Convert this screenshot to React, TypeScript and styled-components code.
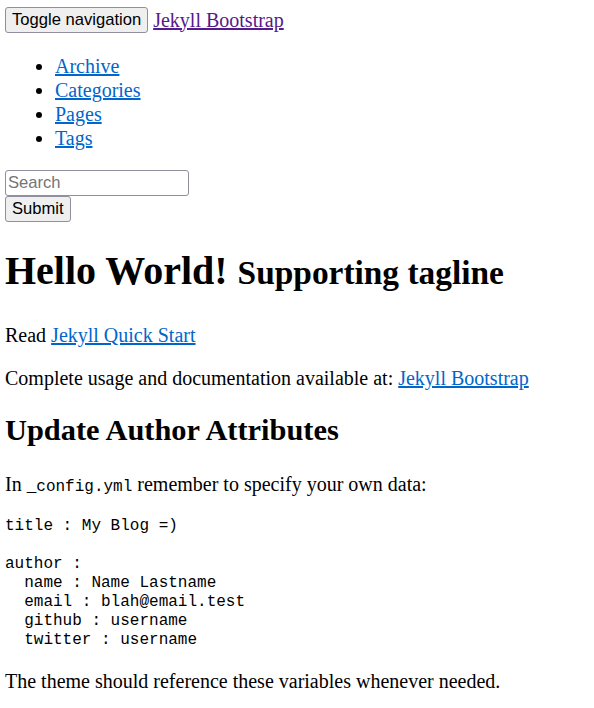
import React from "react";
import styled, { createGlobalStyle } from "styled-components";

const Global = createGlobalStyle`
  html, body { background: #fff; }
  body {
    margin: 7px 5px;
    font-family: "Liberation Serif", "Times New Roman", serif;
    font-size: 20px;
    line-height: 1.15;
    color: #000;
  }
`;

const TopBar = styled.div`
  display: flex;
  align-items: center;
  gap: 5px;
`;

const NativeButton = styled.button`
  font-family: "Liberation Sans", Arial, sans-serif;
  font-size: 16.6px;
  line-height: 19px;
  color: #000;
  background: #efeff0;
  border: 1px solid #8f8f9d;
  border-radius: 3px;
  padding: 2px 6px 3px;
  margin: 0;
`;

const Link = styled.a<{ $visited?: boolean }>`
  color: ${(p) => (p.$visited ? "#551a8b" : "#0066cc")};
  text-decoration: underline;
`;

const NavList = styled.ul`
  margin: 21px 0 20px;
  padding-left: 50px;
  list-style: disc;
  line-height: 24px;
`;

const SearchForm = styled.form`
  display: flex;
  flex-direction: column;
  align-items: flex-start;
`;

const SearchInput = styled.input`
  font-family: "Liberation Sans", Arial, sans-serif;
  font-size: 16.6px;
  width: 184px;
  height: 26px;
  box-sizing: border-box;
  border: 1px solid #8f8f9d;
  border-radius: 3px;
  padding: 1px 2px;
  margin: 0;
  &::placeholder { color: #757575; }
`;

const Title = styled.h1`
  font-size: 40px;
  font-weight: bold;
  margin: 26px 0 28px;
  line-height: 46px;
`;

const Tagline = styled.small`
  font-size: 83.5%;
`;

const Para = styled.p`
  margin: 20px 0;
`;

const SubTitle = styled.h2`
  font-size: 30.4px;
  font-weight: bold;
  margin: 23px 0 25px;
`;

const Code = styled.code`
  font-family: "Liberation Mono", "Courier New", monospace;
  font-size: 16px;
`;

const Pre = styled.pre`
  font-family: "Liberation Mono", "Courier New", monospace;
  font-size: 16px;
  line-height: 19px;
  margin: 21px 0 20px;
`;

export default function App() {
  return (
    <>
      <Global />
      <TopBar>
        <NativeButton type="button">Toggle navigation</NativeButton>
        <Link href="#" $visited>Jekyll Bootstrap</Link>
      </TopBar>
      <NavList>
        <li><Link href="#">Archive</Link></li>
        <li><Link href="#">Categories</Link></li>
        <li><Link href="#">Pages</Link></li>
        <li><Link href="#">Tags</Link></li>
      </NavList>
      <SearchForm onSubmit={(e) => e.preventDefault()}>
        <SearchInput type="text" placeholder="Search" />
        <NativeButton type="submit">Submit</NativeButton>
      </SearchForm>
      <Title>
        Hello World! <Tagline>Supporting tagline</Tagline>
      </Title>
      <Para>
        Read <Link href="#">Jekyll Quick Start</Link>
      </Para>
      <Para>
        Complete usage and documentation available at: <Link href="#">Jekyll Bootstrap</Link>
      </Para>
      <SubTitle>Update Author Attributes</SubTitle>
      <Para>
        In <Code>_config.yml</Code> remember to specify your own data:
      </Para>
      <Pre>{`title : My Blog =)

author :
  name : Name Lastname
  email : blah@email.test
  github : username
  twitter : username`}</Pre>
      <Para>The theme should reference these variables whenever needed.</Para>
    </>
  );
}
